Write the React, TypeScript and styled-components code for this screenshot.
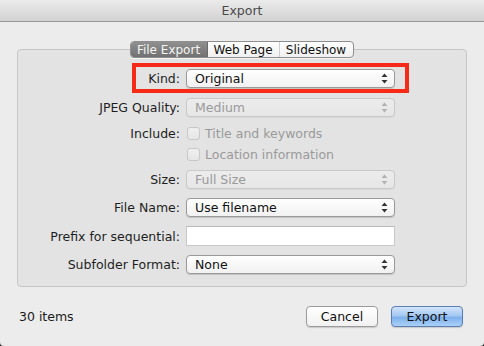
import React from "react";
import styled, { createGlobalStyle, css } from "styled-components";

const Global = createGlobalStyle`
  html, body { margin: 0; padding: 0; background: #3a3a3a; }
  body { font-family: "DejaVu Sans", "Noto Sans", sans-serif; font-size: 12.5px; color: #1a1a1a; }
  *, *::before, *::after { box-sizing: border-box; }
`;

const Window = styled.div`
  width: 484px;
  height: 346px;
  background: #ececec;
  display: flex;
  flex-direction: column;
  overflow: hidden;
  border-radius: 0 0 4px 4px;
`;

const TitleBar = styled.div`
  height: 22px;
  flex: none;
  background: linear-gradient(#ebebeb, #d2d2d2);
  border-bottom: 1px solid #979797;
  display: flex;
  align-items: center;
  justify-content: center;
  font-size: 12.5px;
  color: #4a4a4a;
`;

const Body = styled.div`
  flex: 1;
  display: flex;
  flex-direction: column;
  padding: 19px 17px 0;
`;

const TabBar = styled.div`
  align-self: center;
  position: relative;
  z-index: 1;
  display: flex;
  height: 17px;
  margin-right: 1px;
  border: 1px solid #8e8e8e;
  border-radius: 4px;
  background: linear-gradient(#ffffff, #f0f0f0);
  overflow: hidden;
  box-shadow: 0 1px 0 rgba(255,255,255,0.6);
`;

const Tab = styled.div<{ $active?: boolean; $divider?: boolean; $w: number }>`
  width: ${(p) => p.$w}px;
  display: flex;
  align-items: center;
  justify-content: center;
  font-size: 12px;
  color: #111;
  white-space: nowrap;
  ${(p) => p.$divider && css`border-left: 1px solid #cfcfcf;`}
  ${(p) =>
    p.$active &&
    css`
      background: linear-gradient(#8f8f8f, #727272);
      color: #f4f4f4;
      border-right: 1px solid #6a6a6a;
    `}
`;

const Group = styled.div`
  margin-top: -9px;
  height: 238px;
  border: 1px solid #c6c6c6;
  border-radius: 4px;
  background: #e3e3e3;
  padding-top: 14px;
  display: flex;
  flex-direction: column;
`;

const Row = styled.div<{ $h: number; $highlight?: boolean }>`
  position: relative;
  height: ${(p) => p.$h}px;
  display: grid;
  grid-template-columns: 162px 209px;
  column-gap: 6px;
  align-items: center;
  ${(p) =>
    p.$highlight &&
    css`
      &::after {
        content: "";
        position: absolute;
        left: 114px;
        top: -1px;
        width: 277px;
        height: 30px;
        border: 4px solid #f52b17;
        pointer-events: none;
      }
    `}
`;

const Label = styled.div`
  text-align: right;
  color: #1e1e1e;
  white-space: nowrap;
`;

const Select = styled.div<{ $disabled?: boolean }>`
  height: 19px;
  border: 1px solid ${(p) => (p.$disabled ? "#c9c9c9" : "#9a9a9a")};
  border-radius: 4px;
  background: ${(p) => (p.$disabled ? "linear-gradient(#ececec, #e6e6e6)" : "linear-gradient(#ffffff, #f1f1f1)")};
  box-shadow: 0 1px 1px rgba(0,0,0,${(p) => (p.$disabled ? 0.05 : 0.15)});
  display: flex;
  align-items: center;
  justify-content: space-between;
  padding: 0 6px 0 8px;
  color: ${(p) => (p.$disabled ? "#9a9a9a" : "#111")};
  white-space: nowrap;
`;

const Arrows = ({ disabled }: { disabled?: boolean }) => (
  <svg width="7" height="11" viewBox="0 0 7 11">
    <polygon points="3.5,0.5 6.5,4 0.5,4" fill={disabled ? "#b2b2b2" : "#333"} />
    <polygon points="0.5,7 6.5,7 3.5,10.5" fill={disabled ? "#b2b2b2" : "#333"} />
  </svg>
);

const CheckLine = styled.div`
  display: flex;
  align-items: center;
  gap: 5px;
  padding-left: 1px;
  color: #9a9a9a;
  white-space: nowrap;
`;

const CheckBox = styled.span`
  width: 13px;
  height: 13px;
  border: 1px solid #c8c8c8;
  border-radius: 3px;
  background: linear-gradient(#efefef, #e6e6e6);
`;

const TextField = styled.div`
  height: 20px;
  background: #fff;
  border: 1px solid #c8c8c8;
  border-top-color: #b9b9b9;
`;

const Footer = styled.div`
  flex: 1;
  display: flex;
  align-items: center;
  padding: 0 4px 0 2px;
`;

const Items = styled.div`
  flex: 1;
  color: #1a1a1a;
`;

const Button = styled.div<{ $primary?: boolean }>`
  width: 72px;
  height: 21px;
  margin-left: 13px;
  border-radius: 4px;
  display: flex;
  align-items: center;
  justify-content: center;
  border: 1px solid ${(p) => (p.$primary ? "#5b7fb3" : "#9b9b9b")};
  background: ${(p) =>
    p.$primary
      ? "linear-gradient(#d3e5fb 0%, #a4c8f2 45%, #7fb1ec 55%, #a9d0f7 100%)"
      : "linear-gradient(#ffffff, #f1f1f1)"};
  box-shadow: 0 1px 1px rgba(0,0,0,0.15);
  color: #111;
`;

type SelectRow = { label: string; value: string; disabled?: boolean; h: number };

const SelectField = ({ label, value, disabled, h }: SelectRow) => (
  <Row $h={h}>
    <Label>{label}</Label>
    <Select $disabled={disabled}>
      {value}
      <Arrows disabled={disabled} />
    </Select>
  </Row>
);

export default function App() {
  return (
    <Window>
      <Global />
      <TitleBar>Export</TitleBar>
      <Body>
        <TabBar>
          <Tab $active $w={77}>File Export</Tab>
          <Tab $w={71}>Web Page</Tab>
          <Tab $divider $w={74}>Slideshow</Tab>
        </TabBar>
        <Group>
          <Row $h={28} $highlight>
            <Label>Kind:</Label>
            <Select>
              Original
              <Arrows />
            </Select>
          </Row>
          <SelectField label="JPEG Quality:" value="Medium" disabled h={30} />
          <Row $h={22}>
            <Label>Include:</Label>
            <CheckLine>
              <CheckBox />
              Title and keywords
            </CheckLine>
          </Row>
          <Row $h={20}>
            <Label />
            <CheckLine>
              <CheckBox />
              Location information
            </CheckLine>
          </Row>
          <SelectField label="Size:" value="Full Size" disabled h={30} />
          <SelectField label="File Name:" value="Use filename" h={26} />
          <Row $h={32}>
            <Label>Prefix for sequential:</Label>
            <TextField />
          </Row>
          <SelectField label="Subfolder Format:" value="None" h={24} />
        </Group>
        <Footer>
          <Items>30 items</Items>
          <Button>Cancel</Button>
          <Button $primary>Export</Button>
        </Footer>
      </Body>
    </Window>
  );
}
